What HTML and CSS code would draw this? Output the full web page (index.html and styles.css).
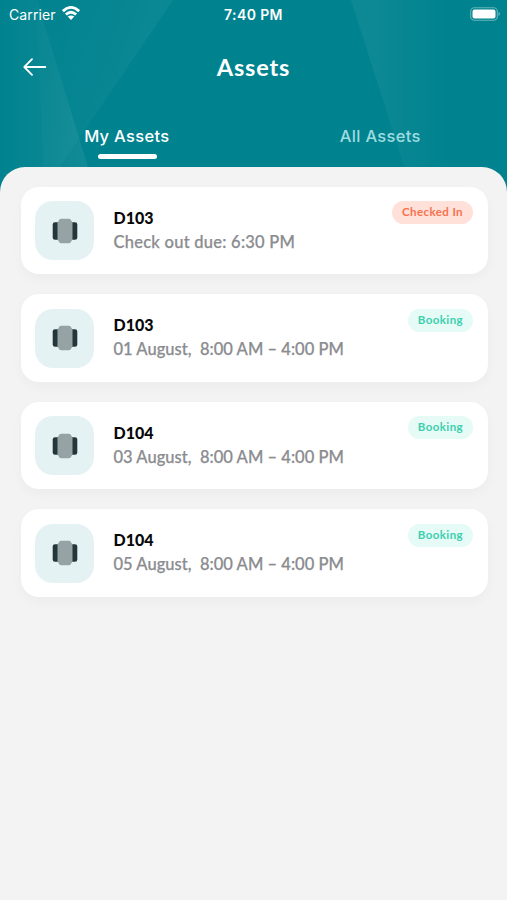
FILE: index.html
```html
<!DOCTYPE html>
<html lang="en">
<head>
<meta charset="utf-8">
<meta name="viewport" content="width=device-width, initial-scale=1">
<title>Assets</title>
<link rel="stylesheet" href="styles.css">
</head>
<body>
<svg class="defs" width="0" height="0" aria-hidden="true">
  <symbol id="device" viewBox="0 0 26 26">
    <rect x="0.7" y="4.3" width="8" height="17.4" rx="2.3" fill="#25363a"/>
    <rect x="17.3" y="4.3" width="8" height="17.4" rx="2.3" fill="#25363a"/>
    <path d="M9 .7h8q1.700 0 2.200 1.800l1.300 2.100v16.800l-1.300 2.100q-.5 1.800-2.200 1.800H9q-1.700 0-2.200-1.800L5.500 21.400V4.600L6.800 2.500Q7.300.7 9 .7Z" fill="#96a3a4"/>
  </symbol>
</svg>
<header class="header">
  <svg class="backdrop" viewBox="0 0 507 200" aria-hidden="true">
    <defs>
      <linearGradient id="g1" x1="0" x2="1"><stop offset="0" stop-color="#fff" stop-opacity="0"/><stop offset="1" stop-color="#fff" stop-opacity=".075"/></linearGradient>
      <linearGradient id="g2" gradientUnits="userSpaceOnUse" x1="50" y1="60" x2="145" y2="90"><stop offset="0" stop-color="#fff" stop-opacity=".01"/><stop offset="1" stop-color="#fff" stop-opacity=".045"/></linearGradient>
      <linearGradient id="g3" gradientUnits="userSpaceOnUse" x1="370" y1="0" x2="450" y2="0"><stop offset="0" stop-color="#fff" stop-opacity=".05"/><stop offset="1" stop-color="#fff" stop-opacity="0"/></linearGradient>
    </defs>
    <path d="M0 0H37L98 200H0Z" fill="url(#g1)"/>
    <path d="M37 0H173L44 190Z" fill="url(#g2)"/>
    <path d="M351 0H507V200H415Z" fill="url(#g3)"/>
  </svg>
  <div class="status">
    <div class="carrier"><span>Carrier</span>
      <svg width="18" height="14" viewBox="0 0 18 14" fill="none" stroke="#fff" stroke-width="2.800"><path d="M.9 5.200Q9-2.400 17.100 5.200M3.900 8.500Q9 4 14.100 8.500"/><path d="M9 14 5.700 10.600Q9 8.200 12.300 10.600Z" fill="#fff" stroke="none"/></svg>
    </div>
    <time class="time">7:40 PM</time>
    <svg class="battery" width="31" height="15" viewBox="0 0 31 15"><rect x=".7" y=".7" width="26.600" height="12.600" rx="3.700" fill="none" stroke="#fff" stroke-opacity=".4" stroke-width="1.100"/><rect x="2.500" y="2.500" width="23" height="9" rx="2" fill="#fff"/><path d="M28.500 4.800q3 2.200 0 4.400Z" fill="#fff" fill-opacity=".4"/></svg>
  </div>
  <div class="titlebar">
    <svg class="back" width="24" height="18" viewBox="0 0 24 18" fill="none" stroke="#fff" stroke-width="1.800" stroke-linecap="round" stroke-linejoin="round"><path d="M22.300 9H1.300M9 1.200 1.300 9 9 16.800"/></svg>
    <h1>Assets</h1>
  </div>
  <nav class="tabs"><a class="tab active">My Assets</a><a class="tab">All Assets</a></nav>
</header>
<main class="sheet">
  <article class="card">
    <div class="thumb"><svg><use href="#device"/></svg></div>
    <div class="info"><h2>D103</h2><p class="due">Check out due: 6:30 PM</p></div>
    <span class="badge checked">Checked In</span>
  </article>
  <article class="card">
    <div class="thumb"><svg><use href="#device"/></svg></div>
    <div class="info"><h2>D103</h2><p>01 August,&nbsp; 8:00 AM – 4:00 PM</p></div>
    <span class="badge">Booking</span>
  </article>
  <article class="card">
    <div class="thumb"><svg><use href="#device"/></svg></div>
    <div class="info"><h2>D104</h2><p>03 August,&nbsp; 8:00 AM – 4:00 PM</p></div>
    <span class="badge">Booking</span>
  </article>
  <article class="card">
    <div class="thumb"><svg><use href="#device"/></svg></div>
    <div class="info"><h2>D104</h2><p>05 August,&nbsp; 8:00 AM – 4:00 PM</p></div>
    <span class="badge">Booking</span>
  </article>
</main>
</body>
</html>
```
FILE: styles.css
```css
* { box-sizing: border-box; }
body { margin: 0; min-height: 900px; background: #f3f3f3; font-family: Lato, sans-serif; }
h1, h2, p { margin: 0; }
.defs { position: absolute; }
.header { position: relative; height: 200px; background: #00838f; color: #fff; font-family: Inter, sans-serif; }
.backdrop { position: absolute; inset: 0; width: 100%; height: 100%; }
.status { position: relative; display: grid; grid-template-columns: 1fr auto 1fr; align-items: center; height: 28px; padding: 0 6px 0 9px; font-size: 14px; }
.carrier { display: flex; align-items: center; gap: 6px; letter-spacing: .1px; }
.carrier svg { margin-top: -2px; }
.time { margin-left: -3px; font-weight: 600; font-size: 14px; letter-spacing: .4px; }
.battery { justify-self: end; }
.titlebar { position: relative; display: grid; grid-template-columns: 1fr auto 1fr; align-items: center; height: 78px; padding: 0 23px; }
.titlebar h1 { font: 700 23.5px/30px Lato, sans-serif; letter-spacing: .8px; }
.tabs { position: relative; display: flex; height: 54px; }
.tab { flex: 1; display: flex; flex-direction: column; align-items: center; padding-top: 20px; font-size: 16.5px; line-height: 20px; font-weight: 500; letter-spacing: .3px; color: #9edce0; }
.tab.active { color: #fff; }
.tab.active::after { content: ""; width: 59px; height: 5px; margin: 8px 0 0 1px; border-radius: 3px; background: #fff; }
.sheet { position: relative; display: flex; flex-direction: column; gap: 20px; min-height: 733px; margin-top: -33px; padding: 19.5px 19.5px 20px 20.5px; border-radius: 25px 25px 0 0; background: #f3f3f3; }
.card { display: flex; align-items: flex-start; height: 87.5px; padding: 14.5px; border-radius: 18px; background: #fff; box-shadow: 0 5px 12px rgba(0, 0, 0, .03); }
.thumb { display: flex; align-items: center; justify-content: center; width: 59px; height: 59px; border-radius: 18px; background: #e4f2f4; }
.thumb svg { width: 26px; height: 26px; }
.info { flex: 1; padding: 4.5px 0 0 19.5px; }
.info h2 { font-size: 16px; line-height: 24px; font-weight: 900; color: #080808; letter-spacing: 0; }
.info p { font-size: 16.5px; line-height: 25px; font-weight: 500; color: #8b8c90; letter-spacing: .03px; white-space: nowrap; -webkit-text-stroke: .25px #8b8c90; }
.info .due { letter-spacing: .25px; }
.badge { height: 23px; padding: 0 10px; border-radius: 12px; font-size: 11.5px; line-height: 22px; font-weight: 700; letter-spacing: .4px; color: #3dcfaf; background: #e6fbf6; }
.badge.checked { color: #fa704c; background: #ffe1da; }
```
